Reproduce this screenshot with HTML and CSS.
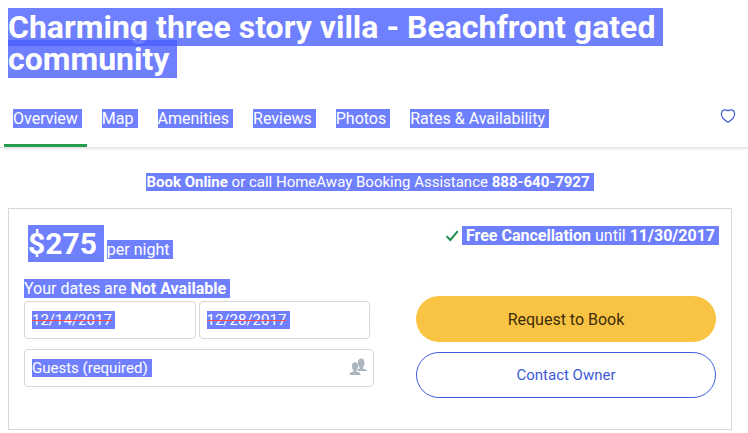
FILE: index.html
```html
<!DOCTYPE html>
<html lang="en">
<head>
  <meta charset="UTF-8">
  <meta name="viewport" content="width=device-width, initial-scale=1.0">
  <title>Charming three story villa</title>
  <link rel="stylesheet" href="styles.css">
</head>
<body>

  <h1 class="title"><span class="mark">Charming three story villa - Beachfront gated community</span></h1>

  <nav class="tabs">
    <a class="tab active" href="#overview"><span class="mark">Overview</span></a>
    <a class="tab" href="#map"><span class="mark">Map</span></a>
    <a class="tab" href="#amenities"><span class="mark">Amenities</span></a>
    <a class="tab" href="#reviews"><span class="mark">Reviews</span></a>
    <a class="tab" href="#photos"><span class="mark">Photos</span></a>
    <a class="tab" href="#rates"><span class="mark">Rates &amp; Availability</span></a>
    <button class="favorite" type="button" aria-label="Save to favorites">
      <svg width="16" height="16" viewBox="0 0 16 16" fill="none" stroke="#3d5bd9" stroke-width="1.2" stroke-linejoin="round">
        <path d="M8 14.2C6.4 13.3 1.4 10 1.4 6C1.4 3.4 2.9 1.8 4.9 1.8C6.3 1.8 7.4 2.2 8 3C8.6 2.2 9.7 1.8 11.1 1.8C13.1 1.8 14.6 3.4 14.6 6C14.6 10 9.6 13.3 8 14.2Z"/>
      </svg>
    </button>
  </nav>

  <main>
    <p class="phone"><span class="mark"><b>Book Online</b> or call HomeAway Booking Assistance <b>888-640-7927</b></span></p>

    <form class="quote">
      <div class="details">
        <div class="price">
          <strong class="amount mark">$275</strong>
          <span class="mark">per night</span>
        </div>
        <p class="status"><span class="mark">Your dates are <b>Not Available</b></span></p>
        <div class="dates">
          <div class="field"><input class="date mark" type="text" value="12/14/2017" aria-label="Check in"></div>
          <div class="field"><input class="date mark" type="text" value="12/28/2017" aria-label="Check out"></div>
        </div>
        <button class="field guests" type="button">
          <span class="mark">Guests (required)</span>
          <svg width="18" height="18" viewBox="0 0 18 18" fill="#abb4bf">
            <path d="M8.6 13V11.6L10.6 10.6V9.4C9.6 8.6 9 7 9 5C8.8 2 10 .4 12.2 .4C14.4 .4 15.6 2 15.4 5C15.4 7 14.8 8.6 13.8 9.4V10.4L16.8 11.4C17.6 11.8 17.8 12.2 17.8 13Z"/>
            <path d="M.6 17C.6 15.6 .9 15 1.6 14.6L4.6 13.4V12.4C3.6 11.6 3 10.2 3 8.4C2.8 5.6 4 4.2 6 4.2C8 4.2 9.2 5.6 9 8.4C9 10.2 8.4 11.6 7.4 12.4V13.4L10.4 14.6C11.1 15 11.4 15.6 11.4 17Z"/>
          </svg>
        </button>
      </div>

      <div class="actions">
        <p class="cancel">
          <svg width="14" height="12" viewBox="0 0 14 12" fill="none" stroke="#1f8f4d" stroke-width="2">
            <path d="M1.6 6.2L5.4 10L12.8 1.2"/>
          </svg>
          <span class="mark"><b>Free Cancellation</b> until <b>11/30/2017</b></span>
        </p>
        <button class="btn btn-book" type="button">Request to Book</button>
        <button class="btn btn-contact" type="button">Contact Owner</button>
      </div>
    </form>
  </main>

</body>
</html>
```

FILE: styles.css
```css
* {
  box-sizing: border-box;
}

body {
  margin: 0;
  font-family: Roboto, Arial, sans-serif;
  font-size: 16px;
  line-height: 20px;
  color: #333;
  background: #fff;
}

p {
  margin: 0;
}

button, input {
  font-family: inherit;
}

/* highlighted text */
.mark {
  background: rgba(72, 93, 255, 0.785);
  color: #fff;
  padding-right: 4px;
}

.title {
  margin: 0;
  padding: 11px 16px 0 8px;
  font-size: 32px;
  line-height: 32px;
  font-weight: 700;
}

.title .mark {
  padding-right: 8px;
  -webkit-box-decoration-break: clone;
  box-decoration-break: clone;
}

.tabs {
  display: flex;
  gap: 6px;
  margin-top: 24px;
  padding: 0 12px 0 4px;
  border-bottom: 1px solid #e4e4e4;
  box-shadow: 0 3px 3px -2px rgba(0, 0, 0, 0.12);
}

.tab {
  padding: 10px 5px 15px 9px;
  border-bottom: 3px solid transparent;
  text-decoration: none;
}

.tab.active {
  border-bottom-color: #259b4e;
}

.favorite {
  align-self: flex-start;
  margin: 9px 0 0 auto;
  padding: 0;
  border: 0;
  background: none;
  line-height: 0;
  cursor: pointer;
}

main {
  margin: 0 16px 0 8px;
}

.phone {
  padding: 24px 0 16px;
  font-size: 15px;
  text-align: center;
}

.quote {
  display: grid;
  grid-template-columns: 7fr 6fr;
  gap: 42px;
  padding: 16px 15px 31px;
  border: 1px solid #d8d8d8;
}

.price {
  display: flex;
  align-items: flex-end;
  gap: 3px;
  padding-left: 4px;
}

.amount {
  font-size: 30px;
  line-height: 37px;
  padding-right: 7px;
}

.price span {
  margin-bottom: 3px;
  line-height: 19px;
}

.status {
  margin-top: 17px;
}

.dates {
  display: flex;
  gap: 3px;
  margin: 2px 4px 10px 0;
}

.field {
  display: flex;
  flex: 1;
  align-items: center;
  height: 38px;
  padding: 0 6px 0 7px;
  border: 1px solid #d8d8d8;
  border-radius: 4px;
  background: #fff;
}

.date {
  width: 83px;
  height: 18px;
  padding: 0;
  border: 0;
  font-size: 15px;
  text-decoration: line-through 1px #ff4a4a;
}

.guests {
  justify-content: space-between;
  width: 100%;
  font-size: 15px;
  cursor: pointer;
}

.guests svg {
  margin-bottom: 2px;
}

.cancel {
  display: flex;
  align-items: center;
  justify-content: flex-end;
  gap: 3px;
  margin: 1px -3px 51px 0;
}

.cancel .mark {
  padding-left: 4px;
  line-height: 19px;
}

.btn {
  display: block;
  width: 100%;
  height: 46px;
  border-radius: 23px;
  cursor: pointer;
}

.btn-book {
  margin-bottom: 10px;
  border: 0;
  background: #f9c443;
  color: #3c2c0a;
  font-size: 16px;
}

.btn-contact {
  border: 1px solid #3d5bd9;
  background: #fff;
  color: #3d5bd9;
  font-size: 15px;
}
```
